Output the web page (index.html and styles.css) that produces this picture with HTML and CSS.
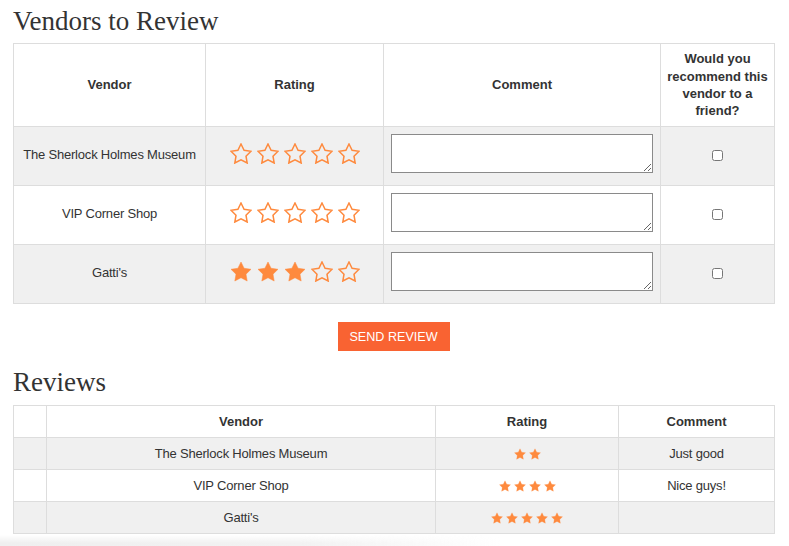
FILE: index.html
```html
<!DOCTYPE html>
<html lang="en">
<head>
<meta charset="utf-8">
<title>Vendors to Review</title>
<link rel="stylesheet" href="styles.css">
</head>
<body>
<svg width="0" height="0" class="defs" aria-hidden="true">
  <defs>
    <path id="star" d="M12 2l3.09 6.26L22 9.27l-5 4.87 1.18 6.88L12 17.770l-6.18 3.25L7 14.14 2 9.27l6.91-1.01L12 2z"/>
  </defs>
</svg>
<div class="page">
  <h1 class="title">Vendors to Review</h1>
  <table class="grid review">
    <colgroup>
      <col class="c-vendor"><col class="c-rating"><col class="c-comment"><col class="c-rec">
    </colgroup>
    <thead>
      <tr>
        <th>Vendor</th>
        <th>Rating</th>
        <th>Comment</th>
        <th>Would you recommend this vendor to a friend?</th>
      </tr>
    </thead>
    <tbody>
      <tr class="odd">
        <td>The Sherlock Holmes Museum</td>
        <td><span class="stars big">
          <svg viewBox="1 1 22 21" class="o"><use href="#star"/></svg><svg viewBox="1 1 22 21" class="o"><use href="#star"/></svg><svg viewBox="1 1 22 21" class="o"><use href="#star"/></svg><svg viewBox="1 1 22 21" class="o"><use href="#star"/></svg><svg viewBox="1 1 22 21" class="o"><use href="#star"/></svg>
        </span></td>
        <td class="cmt"><textarea></textarea></td>
        <td><input type="checkbox"></td>
      </tr>
      <tr>
        <td>VIP Corner Shop</td>
        <td><span class="stars big">
          <svg viewBox="1 1 22 21" class="o"><use href="#star"/></svg><svg viewBox="1 1 22 21" class="o"><use href="#star"/></svg><svg viewBox="1 1 22 21" class="o"><use href="#star"/></svg><svg viewBox="1 1 22 21" class="o"><use href="#star"/></svg><svg viewBox="1 1 22 21" class="o"><use href="#star"/></svg>
        </span></td>
        <td class="cmt"><textarea></textarea></td>
        <td><input type="checkbox"></td>
      </tr>
      <tr class="odd">
        <td>Gatti's</td>
        <td><span class="stars big">
          <svg viewBox="1 1 22 21" class="f"><use href="#star"/></svg><svg viewBox="1 1 22 21" class="f"><use href="#star"/></svg><svg viewBox="1 1 22 21" class="f"><use href="#star"/></svg><svg viewBox="1 1 22 21" class="o"><use href="#star"/></svg><svg viewBox="1 1 22 21" class="o"><use href="#star"/></svg>
        </span></td>
        <td class="cmt"><textarea></textarea></td>
        <td><input type="checkbox"></td>
      </tr>
    </tbody>
  </table>
  <div class="actions">
    <button class="send" type="button">SEND REVIEW</button>
  </div>
  <h1 class="title">Reviews</h1>
  <table class="grid list">
    <colgroup>
      <col class="c-idx"><col class="c-vendor2"><col class="c-rating2"><col class="c-comment2">
    </colgroup>
    <thead>
      <tr>
        <th></th>
        <th>Vendor</th>
        <th>Rating</th>
        <th>Comment</th>
      </tr>
    </thead>
    <tbody>
      <tr class="odd">
        <td></td>
        <td>The Sherlock Holmes Museum</td>
        <td><span class="stars small">
          <svg viewBox="1 1 22 21" class="f"><use href="#star"/></svg><svg viewBox="1 1 22 21" class="f"><use href="#star"/></svg>
        </span></td>
        <td>Just good</td>
      </tr>
      <tr>
        <td></td>
        <td>VIP Corner Shop</td>
        <td><span class="stars small">
          <svg viewBox="1 1 22 21" class="f"><use href="#star"/></svg><svg viewBox="1 1 22 21" class="f"><use href="#star"/></svg><svg viewBox="1 1 22 21" class="f"><use href="#star"/></svg><svg viewBox="1 1 22 21" class="f"><use href="#star"/></svg>
        </span></td>
        <td>Nice guys!</td>
      </tr>
      <tr class="odd">
        <td></td>
        <td>Gatti's</td>
        <td><span class="stars small">
          <svg viewBox="1 1 22 21" class="f"><use href="#star"/></svg><svg viewBox="1 1 22 21" class="f"><use href="#star"/></svg><svg viewBox="1 1 22 21" class="f"><use href="#star"/></svg><svg viewBox="1 1 22 21" class="f"><use href="#star"/></svg><svg viewBox="1 1 22 21" class="f"><use href="#star"/></svg>
        </span></td>
        <td></td>
      </tr>
    </tbody>
  </table>
  <div class="fade"></div>
</div>
</body>
</html>
```

FILE: styles.css
```css
html, body {
  margin: 0;
  padding: 0;
  background: #fff;
}

body {
  font-family: "Liberation Sans", Arial, sans-serif;
  font-size: 13px;
  color: #333;
  overflow: hidden;
}

.defs {
  position: absolute;
  width: 0;
  height: 0;
}

.page {
  padding: 6px 15px 0 13px;
}

.title {
  margin: 0;
  font-family: "Liberation Serif", Georgia, serif;
  font-weight: normal;
  font-size: 27px;
  line-height: 30px;
  color: #333;
}

.grid {
  width: 761px;
  border-collapse: collapse;
  table-layout: fixed;
  border: 1px solid #ddd;
}

.grid th,
.grid td {
  border: 1px solid #ddd;
  text-align: center;
  vertical-align: middle;
}

.grid td {
  letter-spacing: -0.2px;
}

.grid tr.odd td {
  background: #f0f0f0;
}

.review {
  margin-top: 7px;
}

.review th {
  height: 70px;
  padding: 6px 5px;
  line-height: 1.33;
  font-weight: bold;
}

.review td {
  padding: 5px 5px 9px;
  line-height: 15px;
}

.review td.cmt {
  padding: 7px;
}

.c-vendor { width: 192px; }
.c-rating { width: 178px; }
.c-comment { width: 277px; }
.c-rec { width: 114px; }

.c-idx { width: 33px; }
.c-vendor2 { width: 389px; }
.c-rating2 { width: 183px; }
.c-comment2 { width: 156px; }

textarea {
  display: block;
  box-sizing: border-box;
  width: 262px;
  height: 39px;
  margin: 0 auto 5px;
  border: 1px solid #8a8a8a;
  background: #fff;
  resize: vertical;
  font-family: "Liberation Sans", Arial, sans-serif;
  font-size: 13px;
}

input[type="checkbox"] {
  display: block;
  margin: 2px auto 0;
  width: 11px;
  height: 11px;
}

.stars {
  display: flex;
  justify-content: center;
  fill: #fe8a3e;
  stroke: #fe8a3e;
}

.stars.big {
  gap: 5px;
  margin-bottom: 1px;
}

.stars.big svg {
  width: 22px;
  height: 21px;
}

.stars.small {
  gap: 3px;
}

.stars.small svg {
  width: 12px;
  height: 12px;
}

.stars svg.o {
  fill: none;
  stroke-width: 1.5;
  stroke-linejoin: miter;
}

.stars svg.f {
  stroke-width: 0.5;
}

.actions {
  display: flex;
  justify-content: center;
  padding: 18px 0 16px;
}

.send {
  width: 112px;
  height: 29px;
  border: none;
  border-radius: 0;
  background: #f96332;
  color: #fff;
  font-family: "Liberation Sans", Arial, sans-serif;
  font-size: 12.6px;
  padding: 0;
  cursor: pointer;
}

.list {
  margin-top: 8px;
}

.list th {
  padding: 8px;
  line-height: 15px;
  font-weight: bold;
}

.list td {
  padding: 8px;
  line-height: 15px;
}

.fade {
  height: 13px;
  margin: 1px 0 0 -13px;
  width: 520px;
  background: linear-gradient(to right, #efefef 0, #f2f2f2 300px, rgba(255, 255, 255, 0) 500px);
  -webkit-mask-image: linear-gradient(to bottom, transparent 0, #000 8px);
  mask-image: linear-gradient(to bottom, transparent 0, #000 8px);
}
```
